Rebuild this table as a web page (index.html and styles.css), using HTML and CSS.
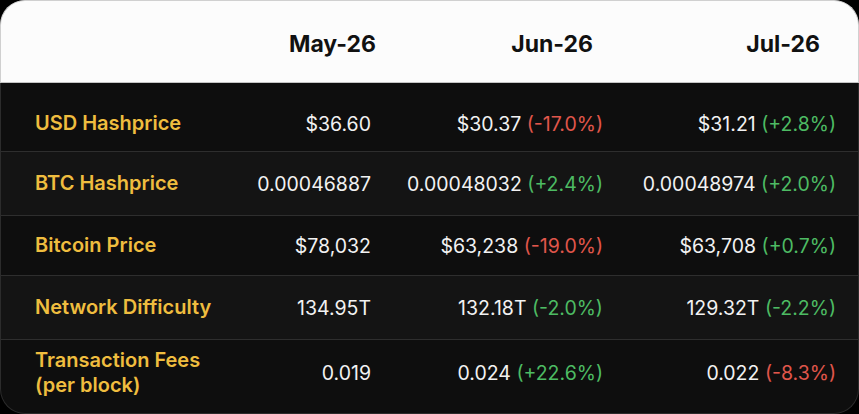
FILE: index.html
```html
<!DOCTYPE html>
<html>
<head>
<meta charset="utf-8">
<link rel="stylesheet" href="styles.css">
</head>
<body>
<div class="card">
  <div class="head">
    <div></div>
    <div class="h h1">May-26</div>
    <div class="h h2">Jun-26</div>
    <div class="h h3">Jul-26</div>
  </div>
  <div class="body">
    <div class="row r1">
      <div class="label">USD Hashprice</div>
      <div class="val">$36.60</div>
      <div class="val">$30.37 <span class="neg">(-17.0%)</span></div>
      <div class="val">$31.21 <span class="pos">(+2.8%)</span></div>
    </div>
    <div class="row r2 alt">
      <div class="label">BTC Hashprice</div>
      <div class="val">0.00046887</div>
      <div class="val">0.00048032 <span class="pos">(+2.4%)</span></div>
      <div class="val">0.00048974 <span class="pos">(+2.0%)</span></div>
    </div>
    <div class="row r3">
      <div class="label">Bitcoin Price</div>
      <div class="val">$78,032</div>
      <div class="val">$63,238 <span class="neg">(-19.0%)</span></div>
      <div class="val">$63,708 <span class="pos">(+0.7%)</span></div>
    </div>
    <div class="row r4 alt">
      <div class="label">Network Difficulty</div>
      <div class="val">134.95T</div>
      <div class="val">132.18T <span class="pos">(-2.0%)</span></div>
      <div class="val">129.32T <span class="pos">(-2.2%)</span></div>
    </div>
    <div class="row r5">
      <div class="label">Transaction Fees<br>(per block)</div>
      <div class="val">0.019</div>
      <div class="val">0.024 <span class="pos">(+22.6%)</span></div>
      <div class="val">0.022 <span class="neg">(-8.3%)</span></div>
    </div>
  </div>
</div>
</body>
</html>
```

FILE: styles.css
```css
html, body {
  margin: 0;
  padding: 0;
  background: #000;
}
body {
  font-family: Inter, "Liberation Sans", sans-serif;
  width: 859px;
  height: 414px;
  overflow: hidden;
}
.card {
  width: 859px;
  height: 414px;
  display: flex;
  flex-direction: column;
}
.head, .row {
  display: grid;
  grid-template-columns: 215px 121px 232px 233px;
  padding-left: 34px;
  padding-right: 22px;
  box-sizing: border-box;
  align-items: center;
}
.head {
  height: 83px;
  background: #fcfcfc;
  border: 1px solid #d0d0d0;
  border-bottom-color: #c4c4c4;
  border-radius: 25px 25px 0 0;
}
.h {
  font-weight: 700;
  font-size: 23px;
  color: #111;
  text-align: right;
  padding-top: 4px;
}
.h1 { margin-right: -5px; }
.h2 { padding-right: 10px; }
.h3 { padding-right: 16px; }
.body {
  flex: 1;
  background: #0e0e0e;
  border: 1px solid #2c2c2c;
  border-top: none;
  border-radius: 0 0 25px 25px;
  overflow: hidden;
  display: flex;
  flex-direction: column;
}
.row {
  border-bottom: 1px solid #2e2e2e;
}
.row.alt { background: #141414; }
.r1 { height: 69px; padding-top: 13px; }
.r2 { height: 64px; }
.r3 { height: 60px; }
.r4 { height: 64px; }
.r5 { flex: 1; border-bottom: none; padding-bottom: 8px; }
.label {
  color: #efbd3f;
  font-weight: 600;
  font-size: 20px;
  line-height: 25px;
}
.val {
  color: #f2f2f2;
  font-size: 19.5px;
  text-align: right;
  white-space: nowrap;
}
.neg { color: #e0564b; }
.pos { color: #4dbb63; }
```
